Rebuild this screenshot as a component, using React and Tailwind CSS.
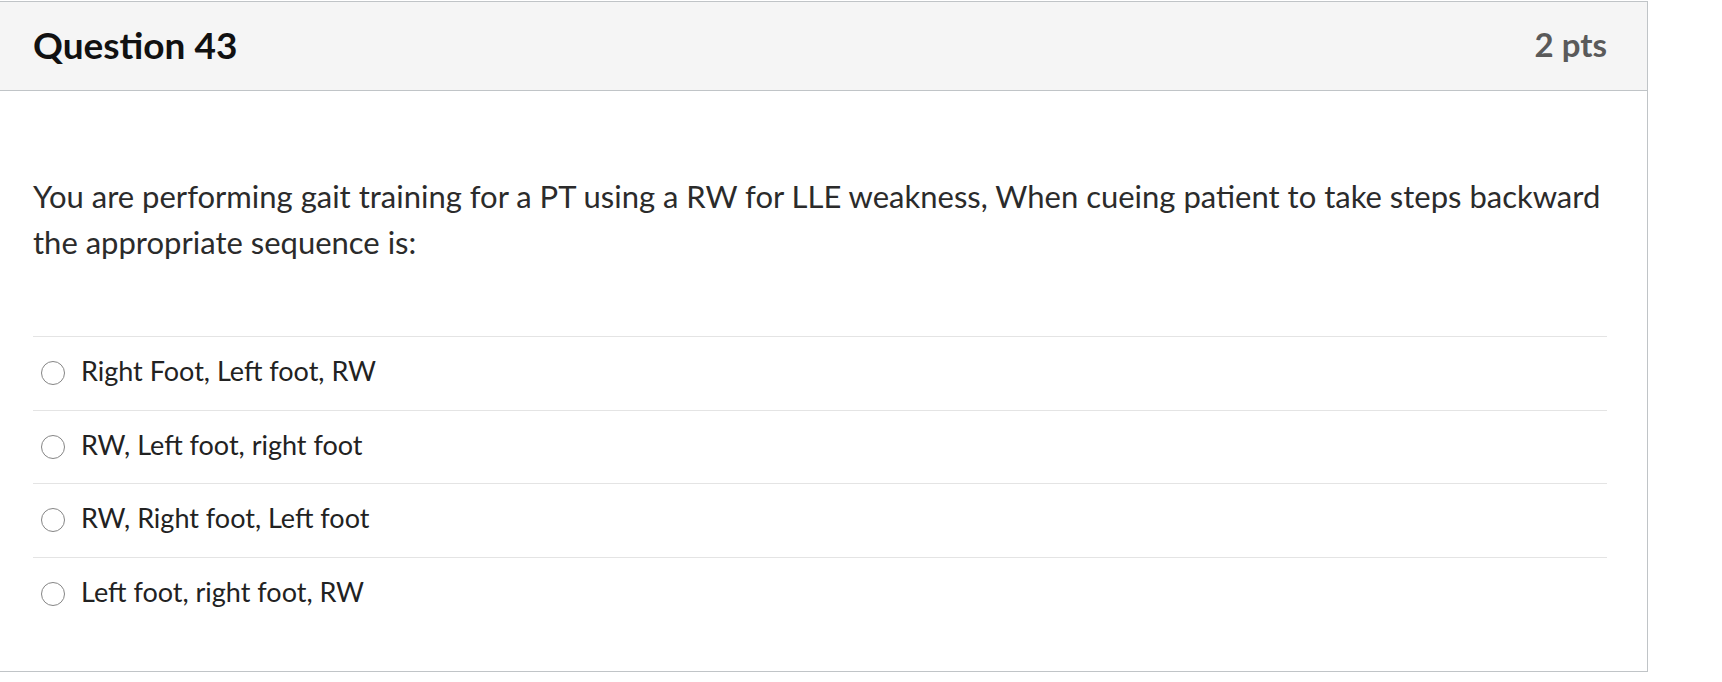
import React from 'react';

const answers = [
  'Right Foot, Left foot, RW',
  'RW, Left foot, right foot',
  'RW, Right foot, Left foot',
  'Left foot, right foot, RW',
];

const App = () => {
  return (
    <div className="w-[1722px] h-[682px] bg-white font-['Lato','Open_Sans',sans-serif] overflow-hidden">
      {/* card */}
      <div className="w-[1648px] mt-px border-t border-r border-b border-[#c0c4c7]">
        <div className="h-[89px] bg-[#f5f5f5] border-b border-[#c0c4c7] flex items-center justify-between pl-[33px] pr-[40px]">
          <h2 className="text-[37px] font-bold text-[#111] -mt-[3px]">Question 43</h2>
          <span className="text-[33px] font-bold text-[#5a5a5a] -mt-[2px]">2 pts</span>
        </div>

        <div className="pt-[82px] pb-[41px] pl-[33px] pr-[40px]">
          <p className="text-[31px] leading-[46px] text-[#2b2b2b] -mr-[4px]">
            You are performing gait training for a PT using a RW for LLE weakness, When cueing patient to take steps backward
            the appropriate sequence is:
          </p>

          <div className="mt-[71px]">
            {answers.map((a) => (
              <label key={a} className="h-[73.5px] border-t border-[#e4e4e4] flex items-center gap-[16px] pl-[8px]">
                <span className="w-[24px] h-[24px] rounded-full border-[1.5px] border-[#858585] bg-white shrink-0" />
                <span className="text-[27px] text-[#222] -mt-[4px]">{a}</span>
              </label>
            ))}
          </div>
        </div>
      </div>
    </div>
  );
};

export default App;
